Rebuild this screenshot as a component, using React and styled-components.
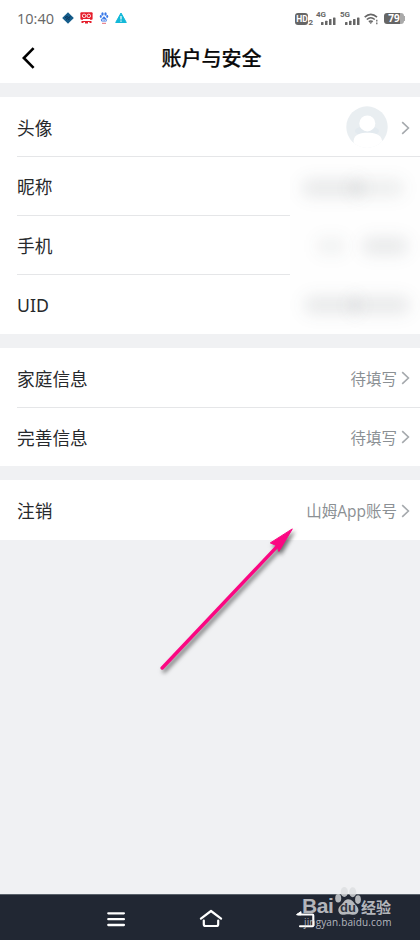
import React from 'react';
import styled, { createGlobalStyle } from 'styled-components';

const profileRows = [
  { label: '头像', avatar: true, arrow: true },
  { label: '昵称', smudge: 'name' },
  { label: '手机', smudge: 'phone' },
  { label: 'UID', smudge: 'uid' },
];

const infoRows = [
  { label: '家庭信息', value: '待填写', arrow: true },
  { label: '完善信息', value: '待填写', arrow: true },
];

const accountRows = [{ label: '注销', value: '山姆App账号', arrow: true }];

// blurred values: [left, width, opacity]
const smudges = {
  name: [[12, 62, 0.1], [60, 54, 0.08]],
  phone: [[26, 30, 0.06], [72, 46, 0.1]],
  uid: [[14, 56, 0.1], [60, 60, 0.1]],
};

const Avatar = () => (
  <AvatarSvg width="42" height="42" viewBox="0 0 42 42">
    <defs>
      <clipPath id="face">
        <circle cx="21" cy="21" r="20.7" />
      </clipPath>
    </defs>
    <g clipPath="url(#face)">
      <rect width="42" height="42" fill="#e9eef1" />
      <ellipse cx="21" cy="25" rx="12" ry="5" fill="#e3eaef" />
      <circle cx="21.3" cy="17.4" r="8" fill="#fff" />
      <path d="M7.6 42V34.5C8.5 28 15 26.8 21.5 26.8S35 28 36 34.5V42Z" fill="#fff" />
      <path d="M0 37H42V42H0Z" fill="#fff" />
    </g>
  </AvatarSvg>
);

const Chevron = () => (
  <svg width="9" height="14" viewBox="0 0 9 14" fill="none" stroke="#a5a9ad" strokeWidth="1.6">
    <path d="M1.2 1.2 7.4 7 1.2 12.8" />
  </svg>
);

const Signal = () => (
  <svg width="15" height="8" viewBox="0 0 15 8" fill="#666">
    <rect x="0" y="5" width="2.5" height="3" rx=".6" />
    <rect x="4" y="3.7" width="2.5" height="4.3" rx=".6" />
    <rect x="8" y="2" width="2.5" height="6" rx=".6" />
    <rect x="12" y="0.4" width="2.5" height="7.6" rx=".6" />
  </svg>
);

const Paw = ({ size, color }) => (
  <svg width={size} height={size} viewBox="0 0 26 28" fill={color}>
    <ellipse cx="9.3" cy="5" rx="3.6" ry="5" />
    <ellipse cx="17.7" cy="5.3" rx="3.5" ry="5" />
    <ellipse cx="3.2" cy="11.2" rx="3" ry="4.3" />
    <ellipse cx="23" cy="12.6" rx="2.9" ry="4.3" />
    <path d="M13 12.3c-3.6 0-4.3 3.8-7.4 6.2-4 3.2-2.4 9.3 2.1 9.2 2.3 0 3.4-.5 5.5-.5s3.4.5 5.4.5c5 0 6.4-5.4 2.9-9-3-3-4.1-6.4-8.5-6.4Z" />
  </svg>
);

const StatusBar = () => (
  <Status>
    <Clock>10:40</Clock>
    <Notices>
      <svg width="12" height="12" viewBox="0 0 12 12">
        <path d="M6 .2 11.8 6 6 11.8.2 6Z" fill="#155d8b" />
        <path d="m3 5.6 2-1 1.5 1 2-1M4 7.4l1.4-.8 1.4.8 1-.6" stroke="#082f55" fill="none" />
      </svg>
      <svg width="13" height="12" viewBox="0 0 13 12">
        <rect x=".4" y=".2" width="12.2" height="7.6" rx="1" fill="#e51d2b" />
        <path d="M1.5 9h10v2h-2v-1H8v1.5H5V10H3.5v1h-2Z" fill="#e51d2b" />
        <rect x="2.4" y="2.2" width="3.5" height="3.3" rx="1.5" fill="none" stroke="#fff" strokeWidth=".9" />
        <rect x="7" y="2.2" width="3.5" height="3.3" rx="1.5" fill="none" stroke="#fff" strokeWidth=".9" />
        <path d="M3 7.5h7" stroke="#fff" />
      </svg>
      <svg width="10" height="12" viewBox="0 0 10 12">
        <g fill="#3979e8">
          <ellipse cx="3.5" cy="2" rx="1.2" ry="1.7" />
          <ellipse cx="6.5" cy="2" rx="1.2" ry="1.7" />
          <ellipse cx="1.8" cy="4.5" rx="1" ry="1.4" />
          <ellipse cx="8.2" cy="4.5" rx="1" ry="1.4" />
          <path d="M5 4.2 8 7.6Q8.5 9.6 7 9.6H3Q1.5 9.6 2 7.6Z" />
        </g>
        <path d="M3.2 7.2h1.4v1.3H3.2ZM5.7 7v1.5h1.5V7" stroke="#fff" strokeWidth=".6" fill="none" />
        <path d="M3 11.3h4" stroke="#e36b79" />
      </svg>
      <svg width="12" height="12" viewBox="0 0 12 12">
        <path d="M6 1 11.3 10.5H.7Z" fill="#13b8d8" stroke="#13b8d8" strokeLinejoin="round" />
        <path d="M6 4v3.5M6 8.6v1.2" stroke="#fff" strokeWidth="1.2" />
      </svg>
    </Notices>
    <Network>
      <Hd>HD</Hd>
      <Sim>2</Sim>
      <Cell $left={3}>
        <b>4G</b>
        <Signal />
      </Cell>
      <Cell $left={5}>
        <b>5G</b>
        <Signal />
      </Cell>
      <Wifi width="15" height="12" viewBox="0 0 15 12" fill="none" stroke="#666" strokeWidth="1.6">
        <path d="M.7 4.2Q6.8-1.6 13 4.2M2.8 6.5Q6.8 3 10.8 6.5M4.8 8.7Q6.8 7.2 8.8 8.7" />
        <path d="M5.2 9.2h3.2L6.8 11Z" fill="#666" stroke="none" />
        <path d="M12.8 6.7v1.8M12.8 9.5v1.8" strokeWidth="1.3" />
      </Wifi>
      <Battery>79</Battery>
      <BatteryTip />
    </Network>
  </Status>
);

const Row = ({ row, first }) => (
  <RowBox>
    <RowInner $line={!first}>
      <Label>{row.label}</Label>
      <Value>
        {row.avatar && <Avatar />}
        {row.value && <ValueText>{row.value}</ValueText>}
        {row.arrow && (
          <Arrow $wide={row.avatar}>
            <Chevron />
          </Arrow>
        )}
      </Value>
      {row.smudge && (
        <Hidden>
          {smudges[row.smudge].map(([left, width, opacity]) => (
            <Smudge key={left} $left={left} $width={width} $opacity={opacity} />
          ))}
        </Hidden>
      )}
    </RowInner>
  </RowBox>
);

const Group = ({ rows }) => (
  <GroupBox>
    {rows.map((row, i) => (
      <Row key={row.label} row={row} first={i === 0} />
    ))}
  </GroupBox>
);

const App = () => {
  return (
    <Page>
      <GlobalStyle />
      <StatusBar />
      <Header>
        <svg width="14" height="22" viewBox="0 0 14 22" fill="none" stroke="#000" strokeWidth="2.6">
          <path d="M11.6 1.2 1.8 11 11.6 20.8" />
        </svg>
        <Title>账户与安全</Title>
        <span />
      </Header>
      <Content>
        <Group rows={profileRows} />
        <Group rows={infoRows} />
        <Group rows={accountRows} />
      </Content>
      <NavBar>
        <svg width="20" height="16" viewBox="0 0 20 16" stroke="#fff" strokeWidth="2.3" strokeLinecap="round">
          <path d="M2.3 2.3h15.6M2.3 8.2h15.6M2.3 14h15.6" />
        </svg>
        <svg width="24" height="19" viewBox="0 0 24 19" fill="none" stroke="#fff" strokeWidth="2.2" strokeLinecap="round" strokeLinejoin="round">
          <path d="M1.9 9.6 12 2 22.1 9.6M4.8 11.5v3.7q0 1.8 1.8 1.8h10.8q1.8 0 1.8-1.8v-3.7" />
        </svg>
        <svg width="20" height="18" viewBox="0 0 20 18" fill="none" stroke="#fff" strokeWidth="2.1" strokeLinecap="round" strokeLinejoin="round">
          <path d="M2 4.5H16.4Q17.3 4.5 17.3 5.5V15.3Q17.3 16.3 16.3 16.3H4" />
          <path d="M.8 4.4 5 1.6V4.4Z" fill="#fff" strokeWidth="1" />
        </svg>
      </NavBar>
      <Pointer width="150" height="160" viewBox="0 0 150 160">
        <path d="M12.2 148 127 26.6" stroke="#fb0782" strokeWidth="3.5" strokeLinecap="round" />
        <path d="M142.3 8.9 120.3 22.9 125.2 25 127.6 27.3 128.9 31.5Z" fill="#fb0782" stroke="#fb0782" strokeWidth="1" />
      </Pointer>
      <Watermark>
        <Brand>
          <Bai>Bai</Bai>
          <PawBox>
            <Paw size={28} color="rgba(220, 222, 224, 0.8)" />
            <Du>du</Du>
          </PawBox>
          <Jingyan>经验</Jingyan>
        </Brand>
        <Site>jingyan.baidu.com</Site>
      </Watermark>
    </Page>
  );
};

export default App;

const GlobalStyle = createGlobalStyle`
  * {
    box-sizing: border-box;
  }
  body {
    margin: 0;
    font-family: 'Noto Sans CJK SC', sans-serif;
  }
  svg {
    display: block;
    flex-shrink: 0;
  }
`;

const Page = styled.div`
  position: relative;
  display: flex;
  flex-direction: column;
  width: 420px;
  height: 940px;
  overflow: hidden;
  background: #f0f1f3;
`;

const Status = styled.div`
  display: flex;
  align-items: center;
  height: 37px;
  padding: 0 15px 0 17px;
  background: #fff;
  color: #666;
`;

const Clock = styled.span`
  width: 45px;
  font-family: 'Open Sans', sans-serif;
  font-size: 14.5px;
  line-height: 20px;
  padding-top: 1px;
`;

const Notices = styled.div`
  display: flex;
  align-items: center;
  gap: 6px;
  padding-bottom: 1px;
`;

const Network = styled.div`
  display: flex;
  align-items: center;
  height: 14px;
  margin-left: auto;
  font-family: Roboto, sans-serif;
`;

const Hd = styled.span`
  width: 13px;
  height: 12px;
  border-radius: 3px;
  background: #666;
  color: #fff;
  font-size: 8.5px;
  font-weight: 700;
  line-height: 12px;
  text-align: center;
`;

const Sim = styled.span`
  align-self: flex-end;
  font-size: 8px;
  font-weight: 700;
  line-height: 7px;
`;

const Cell = styled.span`
  display: flex;
  flex-direction: column;
  width: 19px;
  height: 13px;
  margin-left: ${(props) => props.$left}px;
  b {
    height: 5px;
    font-size: 8px;
    font-weight: 700;
    line-height: 6px;
  }
  svg {
    margin-left: 5px;
  }
`;

const Wifi = styled.svg`
  margin-left: 5px;
`;

const Battery = styled.span`
  width: 20px;
  height: 11px;
  margin-left: 5px;
  border-radius: 3px;
  background: linear-gradient(90deg, #666 79%, #aaa 79%);
  color: #fff;
  font-family: 'Open Sans', sans-serif;
  font-size: 10px;
  font-weight: 700;
  line-height: 11px;
  text-align: center;
`;

const BatteryTip = styled.i`
  width: 1px;
  height: 5px;
  background: #aaa;
`;

const Header = styled.header`
  display: grid;
  grid-template-columns: 20px 1fr 20px;
  align-items: center;
  height: 46px;
  padding: 0 19px 4px 22px;
  background: #fff;
`;

const Title = styled.h1`
  margin: 0;
  color: #0a0a0a;
  font-size: 20px;
  font-weight: 500;
  line-height: 30px;
  text-align: center;
  -webkit-text-stroke: 0.2px #0a0a0a;
`;

const Content = styled.main`
  display: flex;
  flex: 1;
  flex-direction: column;
  gap: 14px;
  padding-top: 14px;
`;

const GroupBox = styled.section`
  padding-bottom: 0.2px;
  background: #fff;
`;

const RowBox = styled.div`
  padding-left: 17px;
`;

const RowInner = styled.div`
  position: relative;
  display: flex;
  align-items: center;
  justify-content: space-between;
  height: 59.15px;
  padding: 2px 10px 0 0;
  border-top: 1px solid ${(props) => (props.$line ? '#e5e6e8' : 'transparent')};
`;

const Label = styled.span`
  color: #27292c;
  font-family: 'Noto Sans', 'Noto Sans CJK SC', sans-serif;
  font-size: 17.7px;
  line-height: 26px;
`;

const Value = styled.div`
  display: flex;
  align-items: center;
  margin-top: -1px;
  color: #8b9094;
  font-family: 'Open Sans', 'Noto Sans CJK SC', sans-serif;
  font-size: 15.5px;
  line-height: 24px;
`;

const ValueText = styled.span`
  padding-top: 1px;
`;

const AvatarSvg = styled.svg`
  margin-top: -2px;
`;

const Arrow = styled.span`
  margin-left: ${(props) => (props.$wide ? 13 : 4)}px;
`;

// covers the right end of the row and its divider
const Hidden = styled.div`
  position: absolute;
  top: -1px;
  right: 0;
  bottom: 0;
  width: 130px;
  overflow: hidden;
  background: #fefefe;
  /* the first covered row keeps its full divider */
  ${RowBox}:nth-child(2) & {
    top: 0;
  }
`;

const Smudge = styled.i`
  position: absolute;
  top: 22px;
  left: ${(props) => props.$left}px;
  width: ${(props) => props.$width}px;
  height: 18px;
  border-radius: 8px;
  background: rgba(40, 50, 55, ${(props) => props.$opacity});
  filter: blur(8px);
`;

const NavBar = styled.nav`
  display: flex;
  align-items: center;
  gap: 73px;
  height: 46px;
  padding: 2px 0 0 106px;
  border-top: 1px solid #59616a;
  background: #212733;
`;

const Pointer = styled.svg`
  position: absolute;
  top: 520px;
  left: 150px;
  filter: drop-shadow(2px 3px 2px rgba(0, 0, 0, 0.55));
`;

const Watermark = styled.div`
  position: absolute;
  top: 886px;
  left: 302px;
  width: 96px;
  color: rgba(220, 222, 224, 0.8);
`;

const Brand = styled.div`
  display: flex;
  align-items: flex-end;
  height: 29px;
`;

const Bai = styled.span`
  width: 31px;
  font-family: 'Liberation Sans', sans-serif;
  font-size: 21px;
  font-weight: 700;
  line-height: 19px;
  letter-spacing: -0.4px;
`;

const PawBox = styled.span`
  position: relative;
  width: 27px;
  margin-left: 1px;
`;

const Du = styled.span`
  position: absolute;
  bottom: 1px;
  left: 6px;
  color: #303641;
  font-family: 'Liberation Sans', sans-serif;
  font-size: 13px;
  font-weight: 700;
  line-height: 13px;
`;

const Jingyan = styled.span`
  font-size: 15px;
  font-weight: 700;
  line-height: 17px;
`;

const Site = styled.div`
  padding-left: 2px;
  font-family: 'Open Sans', sans-serif;
  font-size: 10px;
  letter-spacing: 0.15px;
  line-height: 14px;
`;
